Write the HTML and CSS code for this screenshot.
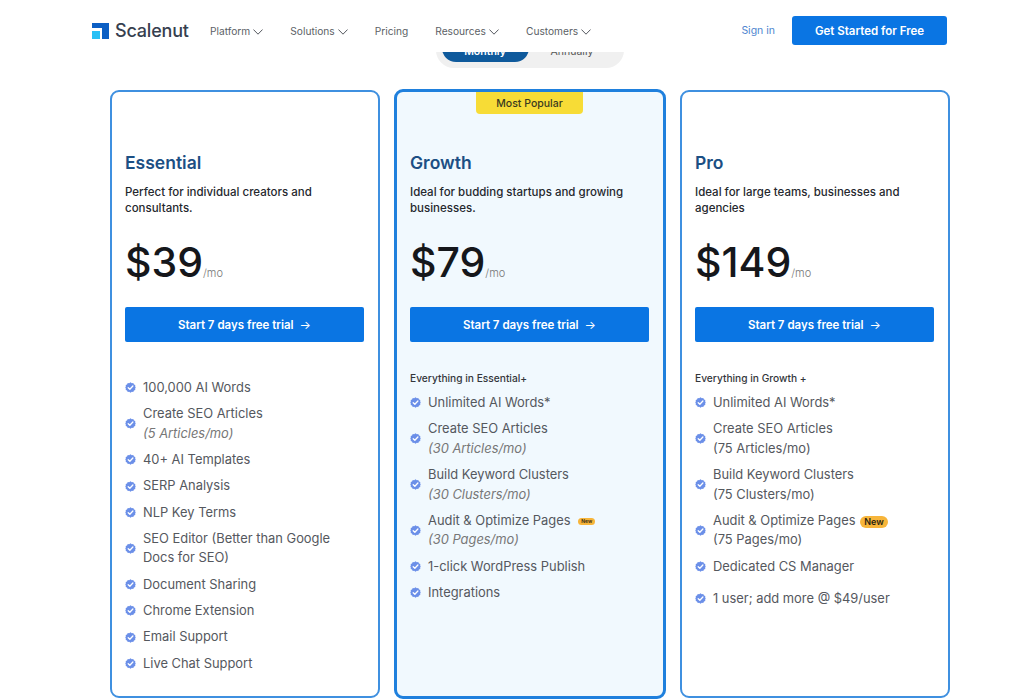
FILE: index.html
```html
<!DOCTYPE html>
<html lang="en">
<head>
<meta charset="utf-8">
<title>Scalenut Pricing</title>
<link rel="stylesheet" href="styles.css">
</head>
<body>
<svg class="defs" width="0" height="0" aria-hidden="true">
  <symbol id="check" viewBox="0 0 12 12">
    <path fill="#6b8fe8" d="M6 .4 7.4 1.3 9 1.2 9.8 2.6 11.2 3.400 11.100 5 11.700 6 11.100 7 11.200 8.600 9.800 9.400 9 10.800 7.400 10.700 6 11.600 4.600 10.700 3 10.800 2.200 9.400.8 8.600.9 7 .3 6 .9 5 .8 3.400 2.200 2.600 3 1.200 4.600 1.300Z"/>
    <path fill="none" stroke="#fff" stroke-width="1.400" stroke-linecap="round" stroke-linejoin="round" d="M3.500 6.200 5.300 7.900 8.600 4.400"/>
  </symbol>
  <symbol id="chev" viewBox="0 0 10 6">
    <path fill="none" stroke="#55585f" stroke-width="1" stroke-linecap="round" stroke-linejoin="round" d="M.7.8 5 5.200 9.300.8"/>
  </symbol>
</svg>

<header class="header">
  <a class="logo">
    <svg class="logo-mark" viewBox="0 0 17 16" width="17" height="16" aria-hidden="true">
      <path fill="#0c5fc4" d="M0 0H17V16H10V5H0Z"/>
      <rect fill="#29c0f5" x="0" y="8" width="8" height="8"/>
    </svg>
    <span class="logo-text">Scalenut</span>
  </a>
  <nav class="nav">
    <a class="nav-item">Platform <svg class="chev" width="10" height="6"><use href="#chev"/></svg></a>
    <a class="nav-item">Solutions <svg class="chev" width="10" height="6"><use href="#chev"/></svg></a>
    <a class="nav-item">Pricing</a>
    <a class="nav-item">Resources <svg class="chev" width="10" height="6"><use href="#chev"/></svg></a>
    <a class="nav-item">Customers <svg class="chev" width="10" height="6"><use href="#chev"/></svg></a>
  </nav>
  <a class="signin">Sign in</a>
  <a class="cta">Get Started for Free</a>
</header>

<div class="toggle-clip">
  <div class="toggle">
    <span class="toggle-on">Monthly</span>
    <span class="toggle-off">Annually</span>
  </div>
</div>

<main class="plans">
  <section class="card">
    <h2 class="plan">Essential</h2>
    <p class="desc">Perfect for individual creators and consultants.</p>
    <p class="price">$39<span class="per">/mo</span></p>
    <a class="trial">Start 7 days free trial <span class="arrow">→</span></a>
    <ul class="list list-plain">
      <li class="item"><svg class="tick"><use href="#check"/></svg><span>100,000 AI Words</span></li>
      <li class="item"><svg class="tick"><use href="#check"/></svg><span>Create SEO Articles<br><em>(5 Articles/mo)</em></span></li>
      <li class="item"><svg class="tick"><use href="#check"/></svg><span>40+ AI Templates</span></li>
      <li class="item"><svg class="tick"><use href="#check"/></svg><span>SERP Analysis</span></li>
      <li class="item"><svg class="tick"><use href="#check"/></svg><span>NLP Key Terms</span></li>
      <li class="item"><svg class="tick"><use href="#check"/></svg><span>SEO Editor (Better than Google<br>Docs for SEO)</span></li>
      <li class="item"><svg class="tick"><use href="#check"/></svg><span>Document Sharing</span></li>
      <li class="item"><svg class="tick"><use href="#check"/></svg><span>Chrome Extension</span></li>
      <li class="item"><svg class="tick"><use href="#check"/></svg><span>Email Support</span></li>
      <li class="item"><svg class="tick"><use href="#check"/></svg><span>Live Chat Support</span></li>
    </ul>
  </section>

  <section class="card card-popular">
    <div class="badge">Most Popular</div>
    <h2 class="plan">Growth</h2>
    <p class="desc">Ideal for budding startups and growing businesses.</p>
    <p class="price">$79<span class="per">/mo</span></p>
    <a class="trial">Start 7 days free trial <span class="arrow">→</span></a>
    <p class="everything">Everything in Essential+</p>
    <ul class="list">
      <li class="item"><svg class="tick"><use href="#check"/></svg><span>Unlimited AI Words*</span></li>
      <li class="item"><svg class="tick"><use href="#check"/></svg><span>Create SEO Articles<br><em>(30 Articles/mo)</em></span></li>
      <li class="item"><svg class="tick"><use href="#check"/></svg><span>Build Keyword Clusters<br><em>(30 Clusters/mo)</em></span></li>
      <li class="item"><svg class="tick"><use href="#check"/></svg><span>Audit &amp; Optimize Pages <b class="new new-small">New</b><br><em>(30 Pages/mo)</em></span></li>
      <li class="item"><svg class="tick"><use href="#check"/></svg><span>1-click WordPress Publish</span></li>
      <li class="item"><svg class="tick"><use href="#check"/></svg><span>Integrations</span></li>
    </ul>
  </section>

  <section class="card">
    <h2 class="plan">Pro</h2>
    <p class="desc">Ideal for large teams, businesses and agencies</p>
    <p class="price">$149<span class="per">/mo</span></p>
    <a class="trial">Start 7 days free trial <span class="arrow">→</span></a>
    <p class="everything">Everything in Growth +</p>
    <ul class="list">
      <li class="item"><svg class="tick"><use href="#check"/></svg><span>Unlimited AI Words*</span></li>
      <li class="item"><svg class="tick"><use href="#check"/></svg><span>Create SEO Articles<br>(75 Articles/mo)</span></li>
      <li class="item"><svg class="tick"><use href="#check"/></svg><span>Build Keyword Clusters<br>(75 Clusters/mo)</span></li>
      <li class="item"><svg class="tick"><use href="#check"/></svg><span>Audit &amp; Optimize Pages <b class="new">New</b><br>(75 Pages/mo)</span></li>
      <li class="item"><svg class="tick"><use href="#check"/></svg><span>Dedicated CS Manager</span></li>
      <li class="item item-spaced"><svg class="tick"><use href="#check"/></svg><span>1 user; add more @ $49/user</span></li>
    </ul>
  </section>
</main>
</body>
</html>
```
FILE: styles.css
```css
* { box-sizing: border-box; }
html, body { margin: 0; height: 700px; overflow: hidden; background: #fff; }
body { font-family: Inter, "Liberation Sans", sans-serif; color: #23262c; }
.defs { position: absolute; }
p, h2, ul { margin: 0; padding: 0; }

.header {
  height: 52px;
  display: flex;
  align-items: center;
  padding: 16px 77px 7px 92px;
  background: #fff;
  position: relative;
  z-index: 2;
}
.logo { display: flex; align-items: center; gap: 6px; width: 118px; }
.logo-mark { flex: none; }
.logo-text { font-size: 18px; font-weight: 500; color: #36404f; letter-spacing: -.2px; }
.nav { display: flex; gap: 27px; font-size: 10.200px; color: #5c5f66; }
.nav-item { display: flex; align-items: center; gap: 3px; white-space: nowrap; }
.chev { display: block; margin-top: 2px; }
.signin { margin-left: auto; font-size: 10.500px; color: #4f86cf; }
.cta {
  margin-left: 17px;
  width: 155px;
  height: 29px;
  display: flex;
  align-items: center;
  justify-content: center;
  border-radius: 3px;
  background: #0a75e3;
  color: #fff;
  font-size: 11.500px;
  font-weight: 600;
}

.toggle-clip {
  height: 16px;
  display: flex;
  justify-content: center;
  align-items: flex-end;
  padding-left: 35px;
}
.toggle {
  flex: none;
  width: 188px;
  height: 44px;
  padding: 6px;
  display: flex;
  background: #f0f0f0;
  border-radius: 0 0 18px 18px;
  font-size: 10.500px;
}
.toggle-on, .toggle-off { width: 87px; display: flex; align-items: center; justify-content: center; padding-top: 10px; }
.toggle-on { background: #0f5a9c; color: #fff; font-weight: 600; border-radius: 0 0 14px 14px; }
.toggle-off { color: #555; }

.plans {
  display: flex;
  align-items: center;
  gap: 14px;
  padding: 21px 75px 0 110px;
}
.card {
  position: relative;
  flex: 270px 0 0;
  height: 608px;
  padding: 61px 14px 0 13px;
  border: 2px solid #3f90e0;
  border-radius: 9px;
  background: #fff;
}
.card-popular {
  flex-basis: 272px;
  height: 610px;
  padding: 61px 14px 0 13px;
  border: 3px solid #1f80dd;
  background: #f1f9fe;
}
.badge {
  position: absolute;
  top: 0;
  left: 79px;
  width: 107px;
  height: 22px;
  display: flex;
  align-items: center;
  justify-content: center;
  border-radius: 0 0 4px 4px;
  background: #f7dc36;
  font-size: 10.500px;
  font-weight: 500;
  color: #3a3a20;
}
.plan { font-size: 17.500px; line-height: 20px; font-weight: 600; color: #1c4f84; }
.desc { margin-top: 11px; height: 32px; font-size: 11.500px; line-height: 16px; font-weight: 500; color: #25282e; }
.price { margin-top: 21px; height: 50px; font-size: 41px; line-height: 50px; font-weight: 500; color: #15171b; }
.per { font-size: 11px; font-weight: 300; color: #777; }
.trial {
  margin-top: 20px;
  height: 35px;
  display: flex;
  align-items: center;
  justify-content: center;
  gap: 6px;
  border-radius: 2px;
  background: #0a75e3;
  color: #fff;
  font-size: 11.500px;
  font-weight: 600;
}
.arrow { font-weight: 400; font-size: 12px; }
.everything { margin-top: 30px; height: 13px; font-size: 10.200px; line-height: 13px; font-weight: 500; color: #33363b; }
.list { margin-top: 8px; list-style: none; display: flex; flex-direction: column; gap: 6.800px; }
.list-plain { margin-top: 36px; }
.item { display: flex; align-items: center; gap: 7px; font-size: 12.900px; line-height: 19.500px; color: #55585e; }
.item-spaced { margin-top: 6px; }
.item em { color: #777; }
.tick { flex: none; width: 11px; height: 11px; }
.new {
  display: inline-block;
  padding: 0 4px;
  margin-left: 1px;
  border-radius: 7px;
  background: #f7b53a;
  color: #2c2412;
  font-size: 9px;
  line-height: 12px;
  font-weight: 600;
  vertical-align: 0;
}
.new-small { margin-left: 4px; padding: 0 3px; font-size: 5px; line-height: 7px; vertical-align: 2px; }
```
